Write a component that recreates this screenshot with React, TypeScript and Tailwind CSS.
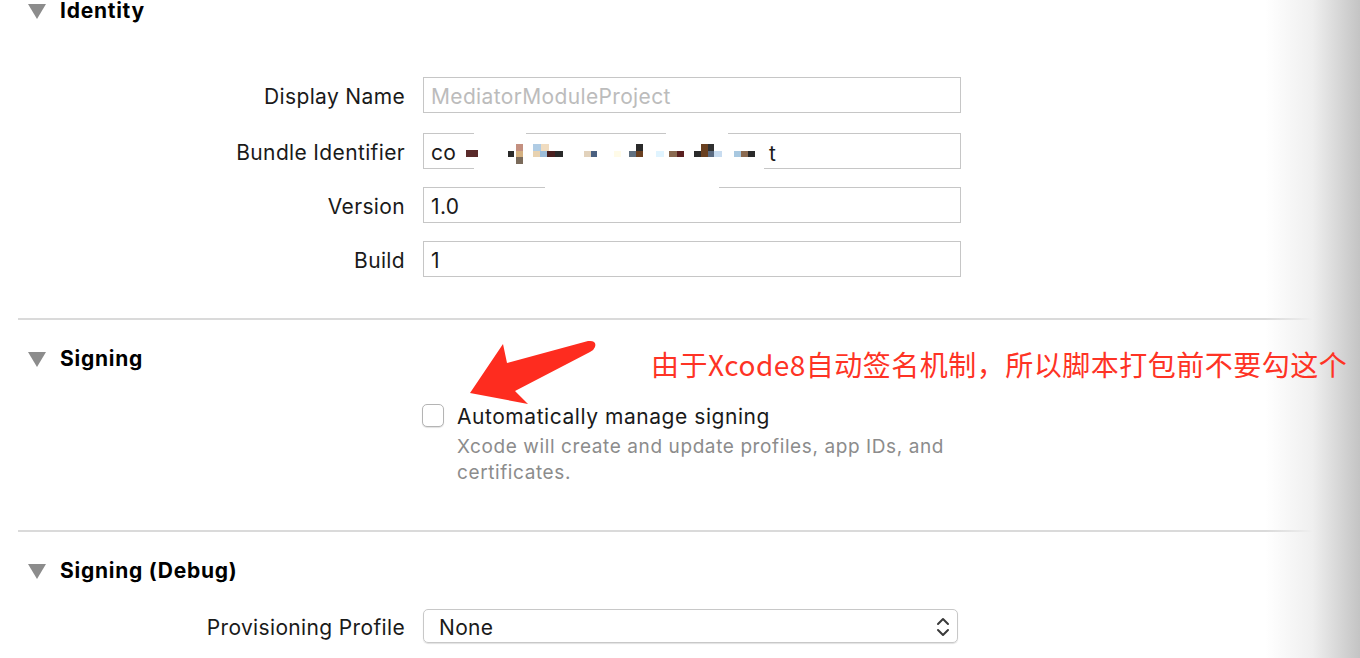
import React from "react";

const Disclosure = () => (
  <svg width="18" height="15" viewBox="0 0 18 15" className="shrink-0">
    <polygon points="0,0 18,0 9,15" fill="#8c8c8c" />
  </svg>
);

const SectionHeader = ({ title, className = "" }: { title: string; className?: string }) => (
  <div className={`flex items-center pl-[28px] ${className}`}>
    <Disclosure />
    <h2 className="ml-[14px] text-[21px] leading-6 font-bold tracking-[0.75px] text-black">{title}</h2>
  </div>
);

const FieldRow = ({
  label,
  children,
  className = "",
}: {
  label: string;
  children: React.ReactNode;
  className?: string;
}) => (
  <div className={`flex items-center ${className}`}>
    <label className="w-[405px] pt-[4px] text-right text-[21px] tracking-[0.35px] text-[#1a1a1a]">{label}</label>
    <div className="ml-[18px]">{children}</div>
  </div>
);

const TextBox = ({ value, muted, children }: { value?: string; muted?: boolean; children?: React.ReactNode }) => (
  <div
    className={`relative w-[538px] h-9 border border-[#c6c6c6] flex items-center pl-[7px] pt-[4px] text-[21px] tracking-[0.35px] ${
      muted ? "text-[#bcbcbc]" : "text-[#1a1a1a]"
    }`}
  >
    {value}
    {children}
  </div>
);

// redaction mosaic over the bundle id, positions relative to the field
const mosaic = [
  { x: 42, y: 16, w: 12, h: 7, c: "#5a2a2a" },
  { x: 84, y: 17, w: 6, h: 6, c: "#2a2a2a" },
  { x: 92, y: 10, w: 7, h: 7, c: "#c49080" },
  { x: 92, y: 17, w: 7, h: 6, c: "#d4b080" },
  { x: 92, y: 23, w: 7, h: 7, c: "#7a6a5a" },
  { x: 109, y: 10, w: 8, h: 7, c: "#b0cce4" },
  { x: 117, y: 10, w: 8, h: 7, c: "#f0dcc0" },
  { x: 109, y: 17, w: 7, h: 6, c: "#e8d2b0" },
  { x: 116, y: 17, w: 7, h: 6, c: "#9cbcd8" },
  { x: 123, y: 17, w: 8, h: 6, c: "#4a2020" },
  { x: 131, y: 17, w: 8, h: 6, c: "#2a2a2a" },
  { x: 160, y: 17, w: 7, h: 6, c: "#e2d2bc" },
  { x: 167, y: 17, w: 6, h: 6, c: "#4a6080" },
  { x: 190, y: 17, w: 7, h: 6, c: "#fffbe8" },
  { x: 205, y: 17, w: 7, h: 6, c: "#607080" },
  { x: 212, y: 10, w: 7, h: 7, c: "#2a2a2a" },
  { x: 212, y: 17, w: 7, h: 6, c: "#6a4020" },
  { x: 232, y: 17, w: 8, h: 6, c: "#e0f4ff" },
  { x: 245, y: 17, w: 8, h: 6, c: "#8a6a50" },
  { x: 253, y: 17, w: 7, h: 6, c: "#5a2020" },
  { x: 270, y: 17, w: 7, h: 6, c: "#2a2a2a" },
  { x: 277, y: 10, w: 7, h: 7, c: "#6a4020" },
  { x: 284, y: 10, w: 6, h: 7, c: "#303030" },
  { x: 277, y: 17, w: 7, h: 6, c: "#6a4020" },
  { x: 284, y: 17, w: 6, h: 6, c: "#5a6a80" },
  { x: 290, y: 17, w: 8, h: 6, c: "#c8dcf0" },
  { x: 310, y: 17, w: 7, h: 6, c: "#a8c8e0" },
  { x: 317, y: 17, w: 7, h: 6, c: "#8a6a50" },
  { x: 324, y: 17, w: 7, h: 6, c: "#2a2a2a" },
];

const Chevrons = () => (
  <svg width="14" height="22" viewBox="0 0 14 22" fill="none" stroke="#3a3a3a" strokeWidth="2" strokeLinecap="round" strokeLinejoin="round">
    <polyline points="2,8 7,3 12,8" />
    <polyline points="2,14 7,19 12,14" />
  </svg>
);

export default function App() {
  return (
    <div className="relative w-[1360px] h-[658px] overflow-hidden bg-white font-['Inter','Noto_Sans',sans-serif]">
      {/* IDENTITY */}
      <SectionHeader title="Identity" className="-mt-[1px]" />

      <FieldRow label="Display Name" className="mt-[54px]">
        <TextBox value="MediatorModuleProject" muted />
      </FieldRow>

      <FieldRow label="Bundle Identifier" className="mt-5">
        <TextBox>
          <span>co</span>
          {mosaic.map((m, i) => (
            <span
              key={i}
              className="absolute"
              style={{ left: m.x, top: m.y, width: m.w, height: m.h, background: m.c }}
            />
          ))}
          <span className="absolute left-[345px] top-[4px]">t</span>
          {/* white smudge over the borders */}
          <span className="absolute left-[50px] -bottom-[2px] w-[290px] h-[4px] bg-white" />
          <span className="absolute left-[50px] -top-[2px] w-[52px] h-[4px] bg-white" />
          <span className="absolute left-[242px] -top-[2px] w-[62px] h-[4px] bg-white" />
        </TextBox>
      </FieldRow>

      <FieldRow label="Version" className="mt-[18px]">
        <TextBox value="1.0">
          <span className="absolute left-[121px] -top-[2px] w-[174px] h-[4px] bg-white" />
        </TextBox>
      </FieldRow>

      <FieldRow label="Build" className="mt-[18px]">
        <TextBox value="1" />
      </FieldRow>

      <div className="ml-[18px] mt-[41px] h-[2px] bg-[#dadada]" />

      {/* SIGNING */}
      <SectionHeader title="Signing" className="mt-[27px]" />

      <div className="ml-[422px] mt-[33px]">
        <div className="flex items-start">
          <div className="w-[22px] h-[23px] rounded-[5px] border border-[#b4b4b4] bg-white shadow-[0_1px_1px_rgba(0,0,0,0.12)]" />
          <span className="ml-[13px] mt-[1px] text-[21px] leading-6 tracking-[0.55px] text-[#1a1a1a]">
            Automatically manage signing
          </span>
        </div>
        <p className="ml-[35px] mt-[5px] text-[19px] leading-[26px] text-[#8c8c8c] tracking-[0.6px]">
          Xcode will create and update profiles, app IDs, and
          <br />
          certificates.
        </p>
      </div>

      <div className="ml-[18px] mt-[44px] h-[2px] bg-[#dadada]" />

      {/* SIGNING (DEBUG) */}
      <SectionHeader title="Signing (Debug)" className="mt-[27px]" />

      <FieldRow label="Provisioning Profile" className="mt-[25px]">
        <div className="w-[535px] h-[34px] rounded-[5px] border border-[#c8c8c8] shadow-[0_1px_1px_rgba(0,0,0,0.12)] flex items-center justify-between pl-[15px] pr-[7px] pt-[3px] text-[21px] tracking-[0.35px] text-[#1a1a1a]">
          <span>None</span>
          <Chevrons />
        </div>
      </FieldRow>

      {/* window edge shading */}
      <div className="pointer-events-none absolute right-0 top-0 h-full w-[95px] bg-gradient-to-r from-white/0 via-[#efefef] to-[#c4c4c4]" />

      {/* annotation */}
      <svg className="absolute left-0 top-0 pointer-events-none" width="1360" height="658">
        <path
          d="M470 393 L503 344 L507 363 L588 341 Q597 340 595 347 Q594 350 590 352 L515 391 L528 404 Z"
          fill="#fe2c1f"
        />
      </svg>
      <p className="absolute left-[651px] top-[347px] text-[28px] leading-[34px] text-[#fe3325] tracking-[0.5px] font-['Noto_Sans_CJK_SC',sans-serif]">
        由于Xcode8自动签名机制，所以脚本打包前不要勾这个
      </p>
    </div>
  );
}
